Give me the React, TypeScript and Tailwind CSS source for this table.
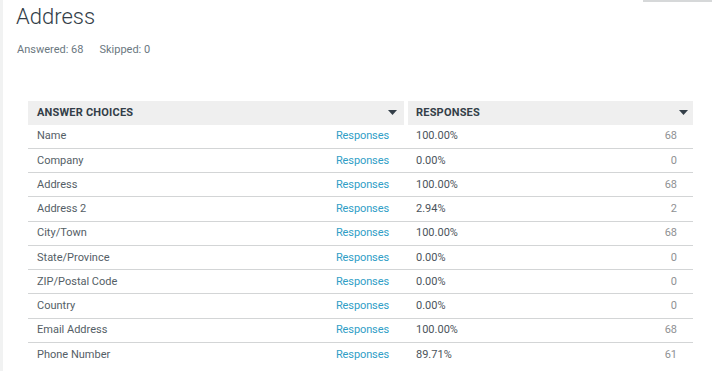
const rows = [
  { label: "Name", pct: "100.00%", count: 68 },
  { label: "Company", pct: "0.00%", count: 0 },
  { label: "Address", pct: "100.00%", count: 68 },
  { label: "Address 2", pct: "2.94%", count: 2 },
  { label: "City/Town", pct: "100.00%", count: 68 },
  { label: "State/Province", pct: "0.00%", count: 0 },
  { label: "ZIP/Postal Code", pct: "0.00%", count: 0 },
  { label: "Country", pct: "0.00%", count: 0 },
  { label: "Email Address", pct: "100.00%", count: 68 },
  { label: "Phone Number", pct: "89.71%", count: 61 },
];

function Caret() {
  return (
    <svg width="9" height="5" viewBox="0 0 9 5" className="shrink-0">
      <path d="M0 0h9L4.5 5z" fill="#333e48" />
    </svg>
  );
}

export default function App() {
  return (
    <div
      className="flex w-[718px] h-[371px] bg-white overflow-hidden"
      style={{ fontFamily: "Roboto, 'Liberation Sans', sans-serif" }}
    >
      {/* page edge */}
      <div className="w-[3px] shrink-0 bg-[#f1f2f2]" />

      <div className="flex-1 flex flex-col">
        {/* top strip with the bottom edge of a control above */}
        <div className="flex h-[2px]">
          <div className="ml-auto mr-[6px] w-[69px] h-[2px] bg-[#d6d8d9]" />
        </div>

        <h1 className="pl-[13px] mt-[1px] text-[22px] leading-[28px] font-light text-[#333e48]">Address</h1>

        <div className="flex gap-[16px] pl-[14px] mt-[11px] text-[11px] leading-[16px] text-[#6b787f]">
          <span>Answered: 68</span>
          <span>Skipped: 0</span>
        </div>

        {/* table */}
        <div className="ml-[25px] mr-[25px] mt-[43px] text-[11px]">
          <div className="flex gap-[4px] h-[23.5px]">
            <div className="w-[376px] flex items-center justify-between bg-[#efefef] pl-[9px] pr-[7px]">
              <span className="font-bold text-[#333e48] tracking-[0.2px]">ANSWER CHOICES</span>
              <Caret />
            </div>
            <div className="flex-1 flex items-center justify-between bg-[#efefef] pl-[8px] pr-[5px]">
              <span className="font-bold text-[#333e48] tracking-[0.2px]">RESPONSES</span>
              <Caret />
            </div>
          </div>

          {rows.map((r, i) => (
            <div
              key={r.label}
              className={
                "flex items-center h-[24.25px] pt-[1px] " +
                (i < rows.length - 1 ? "border-b border-[#d3d5d6]" : "")
              }
            >
              <div className="w-[380px] flex items-center justify-between pl-[9px] pr-[19px]">
                <span className="text-[#545e66]">{r.label}</span>
                <span className="text-[#2f9ec6] tracking-[-0.1px]">Responses</span>
              </div>
              <div className="flex-1 flex items-center justify-between pl-[8px] pr-[16px]">
                <span className="text-[#4b545b]">{r.pct}</span>
                <span className="text-[#8f9193]">{r.count}</span>
              </div>
            </div>
          ))}
        </div>
      </div>
    </div>
  );
}
